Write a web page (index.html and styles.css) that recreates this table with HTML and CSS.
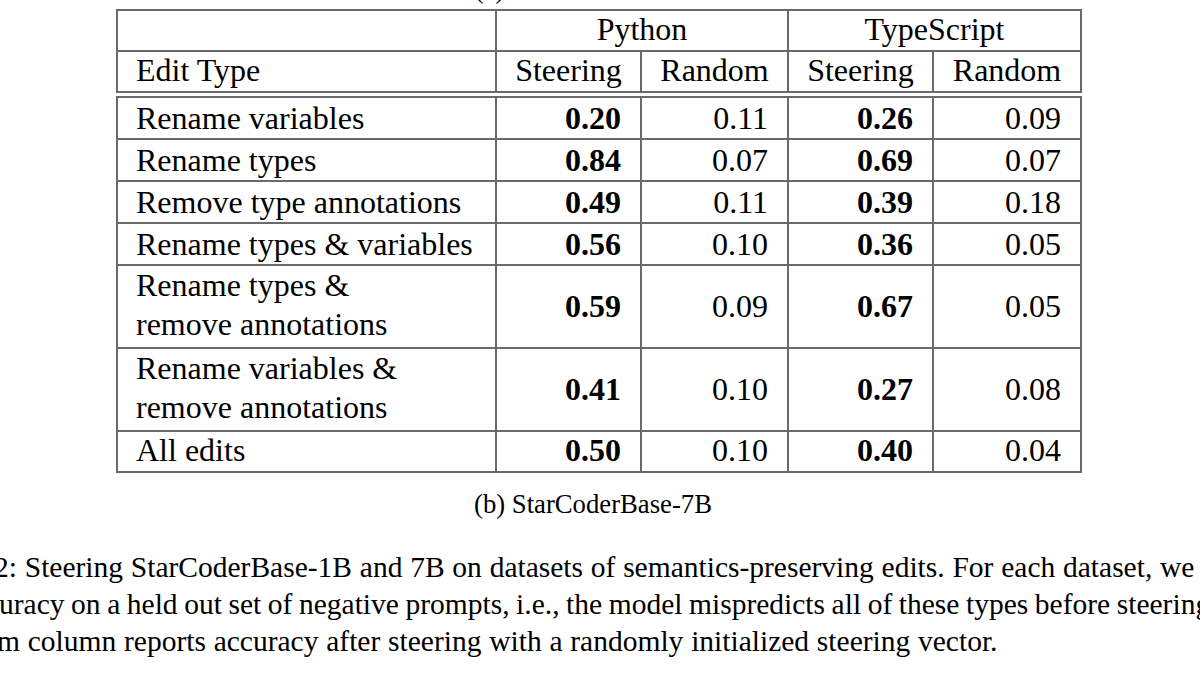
FILE: index.html
```html
<!DOCTYPE html>
<html lang="en">
<head>
<meta charset="utf-8">
<title>Steering results table</title>
<link rel="stylesheet" href="styles.css">
</head>
<body>
<div class="page">
  <div class="subcaption subcaption-top">(a) StarCoderBase-1B</div>

  <div class="table-wrap">
    <table class="grid head">
      <colgroup>
        <col class="c-edit"><col class="c-num"><col class="c-num2"><col class="c-num"><col class="c-num3">
      </colgroup>
      <tr class="h-row">
        <td></td>
        <td colspan="2" class="center">Python</td>
        <td colspan="2" class="center">TypeScript</td>
      </tr>
      <tr class="h-row">
        <td class="label">Edit Type</td>
        <td class="center">Steering</td>
        <td class="center">Random</td>
        <td class="center">Steering</td>
        <td class="center">Random</td>
      </tr>
    </table>

    <table class="grid body">
      <colgroup>
        <col class="c-edit"><col class="c-num"><col class="c-num2"><col class="c-num"><col class="c-num3">
      </colgroup>
      <tr>
        <td class="label">Rename variables</td>
        <td class="num best">0.20</td><td class="num">0.11</td>
        <td class="num best">0.26</td><td class="num">0.09</td>
      </tr>
      <tr>
        <td class="label">Rename types</td>
        <td class="num best">0.84</td><td class="num">0.07</td>
        <td class="num best">0.69</td><td class="num">0.07</td>
      </tr>
      <tr>
        <td class="label">Remove type annotations</td>
        <td class="num best">0.49</td><td class="num">0.11</td>
        <td class="num best">0.39</td><td class="num">0.18</td>
      </tr>
      <tr>
        <td class="label">Rename types &amp; variables</td>
        <td class="num best">0.56</td><td class="num">0.10</td>
        <td class="num best">0.36</td><td class="num">0.05</td>
      </tr>
      <tr class="tall">
        <td class="label">Rename types &amp;<br>remove annotations</td>
        <td class="num best">0.59</td><td class="num">0.09</td>
        <td class="num best">0.67</td><td class="num">0.05</td>
      </tr>
      <tr class="tall">
        <td class="label">Rename variables &amp;<br>remove annotations</td>
        <td class="num best">0.41</td><td class="num">0.10</td>
        <td class="num best">0.27</td><td class="num">0.08</td>
      </tr>
      <tr class="last">
        <td class="label">All edits</td>
        <td class="num best">0.50</td><td class="num">0.10</td>
        <td class="num best">0.40</td><td class="num">0.04</td>
      </tr>
    </table>
  </div>

  <div class="subcaption subcaption-bottom">(b) StarCoderBase-7B</div>

  <div class="caption">
    <div class="cap-line l1">2: Steering StarCoderBase-1B and 7B on datasets of semantics-preserving edits. For each dataset, we</div>
    <div class="cap-line l2">uracy on a held out set of negative prompts, i.e., the model mispredicts all of these types before steering</div>
    <div class="cap-line l3">m column reports accuracy after steering with a randomly initialized steering vector.</div>
  </div>
</div>
</body>
</html>
```

FILE: styles.css
```css
html, body {
  margin: 0;
  padding: 0;
  background: #ffffff;
  overflow: hidden;
  width: 1200px;
  height: 675px;
}

.page {
  font-family: "Liberation Serif", "Times New Roman", serif;
  color: #000000;
}

.subcaption {
  width: 1186px;
  text-align: center;
  font-size: 26.7px;
  line-height: 30px;
  white-space: nowrap;
}

.subcaption-top {
  margin-top: -26px;
  height: 30px;
}

.subcaption-bottom {
  margin-top: 13px;
  line-height: 36px;
}

.table-wrap {
  margin-left: 116px;
  margin-top: 5px;
  width: 966px;
}

.grid {
  border-collapse: separate;
  border-spacing: 0;
  table-layout: fixed;
  width: 966px;
  border-top: 2px solid #6a6a6a;
  border-left: 2px solid #6a6a6a;
  font-size: 32px;
}

.grid td {
  border-right: 2px solid #6a6a6a;
  border-bottom: 2px solid #6a6a6a;
  padding: 0;
  line-height: 40px;
  vertical-align: middle;
  white-space: nowrap;
}

.c-edit { width: 379px; }
.c-num { width: 145px; }
.c-num2 { width: 147px; }
.c-num3 { width: 148px; }

.head td {
  line-height: 36px;
  padding-bottom: 3px;
}

.body {
  margin-top: 3px;
}

.label {
  padding-left: 18px !important;
  text-align: left;
}

.center {
  text-align: center;
}

.num {
  text-align: right;
  padding-right: 19px !important;
}

.best {
  font-weight: bold;
}

.tall td {
  padding-bottom: 1px;
}

.tall td.label {
  padding-bottom: 3px;
  line-height: 39px;
}

.last td {
  line-height: 37px;
  padding-bottom: 2px;
}

.caption {
  margin-top: 27px;
  font-size: 29.5px;
  line-height: 37px;
}

.cap-line {
  white-space: nowrap;
}

.l1 { margin-left: -6px; word-spacing: 0.4px; }
.l2 { margin-left: -1px; word-spacing: -0.8px; }
.l3 { margin-left: -3px; word-spacing: 0.4px; }
```
